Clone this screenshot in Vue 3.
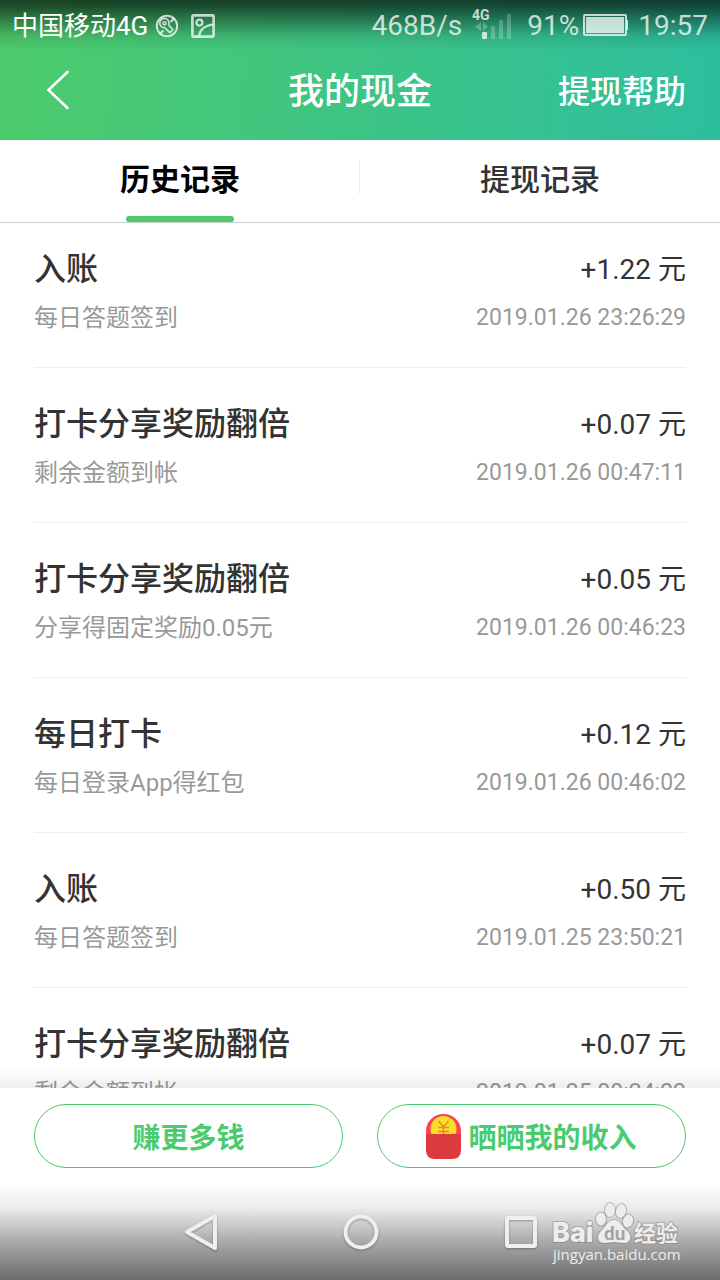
<template>
  <div class="page">
    <header class="header">
      <div class="status-bar">
        <span class="carrier">中国移动4G</span>
        <svg class="status-icon" viewBox="0 0 24 24" fill="none" stroke="currentColor" stroke-width="2">
          <circle cx="12" cy="12" r="10.200" />
          <path d="M13.600 10.800A4.600 4.600 0 1 0 9.600 13.600L14.800 18.600 17.800 15.600Z" stroke-width="1.600" />
          <circle cx="9.500" cy="9.200" r="1.500" stroke-width="1.500" />
          <path d="M15.500 8l4-4M4.500 20l4-3.500" />
        </svg>
        <svg class="status-icon second" viewBox="0 0 24 24" fill="none" stroke="currentColor" stroke-width="2.600">
          <rect x="1.400" y="1.400" width="21.200" height="21.200" rx="1" />
          <circle cx="8.400" cy="8.600" r="3" stroke-width="2.200" />
          <path d="M8 22C9 16 14 11.500 22 10.500" stroke-width="2.200" />
        </svg>
        <span class="speed">468B/s</span>
        <svg class="signal" viewBox="0 0 40 32" fill="currentColor">
          <text x="0" y="12" class="signal-text">4G</text>
          <path d="M9 14v9l-6-4.500zM11 14v9l5-4.500z" opacity="0.35" />
          <rect x="10" y="24" width="5" height="7" rx="1" />
          <rect x="19" y="18" width="4" height="13" rx="1" opacity="0.3" />
          <rect x="27" y="12" width="4" height="19" rx="1" opacity="0.3" />
          <rect x="35" y="6" width="4" height="25" rx="1" opacity="0.3" />
        </svg>
        <span class="percent">91%</span>
        <svg class="battery" viewBox="0 0 46 24" fill="currentColor">
          <rect x="1" y="2" width="42" height="20" rx="1" fill="none" stroke="currentColor" stroke-width="2" />
          <rect x="3" y="4" width="38" height="16" />
          <rect x="43" y="7" width="2" height="10" />
        </svg>
        <time class="clock">19:57</time>
      </div>
      <nav class="nav-bar">
        <button type="button" class="back" aria-label="返回">
          <svg viewBox="0 0 24 40" fill="none" stroke="#fff" stroke-width="2.600" stroke-linecap="round">
            <path d="M21.500 2L2.500 20L21.500 38" />
          </svg>
        </button>
        <h1 class="nav-title">我的现金</h1>
        <a href="#help" class="help">提现帮助</a>
      </nav>
    </header>

    <div class="tabs">
      <button
        v-for="(tab, index) in tabs"
        :key="tab"
        type="button"
        class="tab"
        :class="{ active: index === activeTab }"
        @click="activeTab = index"
      >
        {{ tab }}
      </button>
    </div>

    <main class="list-wrap">
      <ul class="list">
        <li v-for="(record, index) in records" :key="index" class="record">
          <div class="line">
            <span class="title">{{ record.title }}</span>
            <span class="amount">{{ record.amount }} 元</span>
          </div>
          <div class="line sub">
            <span>{{ record.desc }}</span>
            <time class="date">{{ record.time }}</time>
          </div>
        </li>
      </ul>
    </main>

    <footer class="actions">
      <button type="button" class="action">赚更多钱</button>
      <button type="button" class="action">
        <svg class="packet" viewBox="0 0 35 45">
          <path d="M0 21V17A17.500 17 0 0 1 35 17V21Z" fill="#ff3f55" />
          <circle cx="17.500" cy="15" r="13" fill="#ffdf26" />
          <path d="M12.500 7l5 6L22.500 7M17.500 13V21M12 13.500h11M12 17.500h11" fill="none" stroke="#e8892b" stroke-width="1.600" />
          <path d="M0 20H35V36Q35 45 26 45H9Q0 45 0 36Z" fill="#dc3a3f" />
        </svg>
        晒晒我的收入
      </button>
    </footer>

    <div class="system-bar">
      <button type="button" class="key" aria-label="后退">
        <svg viewBox="0 0 40 40"><path d="M35 4V36L7 20Z" /></svg>
      </button>
      <button type="button" class="key" aria-label="主页">
        <svg viewBox="0 0 40 40"><circle cx="21" cy="20" r="15.500" /></svg>
      </button>
      <button type="button" class="key" aria-label="最近任务">
        <svg viewBox="0 0 40 40"><rect x="7" y="6" width="28" height="28" rx="1" /></svg>
      </button>
      <svg class="watermark" viewBox="0 0 132 66">
        <g class="mark">
          <text x="0" y="40" class="mark-latin">Bai</text>
          <ellipse cx="49" cy="17" rx="5" ry="6.500" />
          <ellipse cx="58" cy="8" rx="5" ry="7" />
          <ellipse cx="69" cy="9" rx="5" ry="7" transform="rotate(12 69 9)" />
          <ellipse cx="76" cy="19" rx="5" ry="6.500" transform="rotate(15 76 19)" />
          <path d="M62 18C68 18 70 24 74 28C81 33 79 41 72 41C68 41 65 40 62 40C59 40 56 41 52 41C45 41 44 33 50 28C54 24 56 18 62 18Z" />
          <text x="82" y="39" class="mark-cjk">经验</text>
        </g>
        <text x="52" y="38" class="mark-du">du</text>
        <text x="1" y="58" class="mark-url">jingyan.baidu.com</text>
      </svg>
    </div>
  </div>
</template>

<script setup>
import { ref } from "vue";

const tabs = ["历史记录", "提现记录"];
const activeTab = ref(0);

const records = [
  { title: "入账", amount: "+1.22", desc: "每日答题签到", time: "2019.01.26 23:26:29" },
  { title: "打卡分享奖励翻倍", amount: "+0.07", desc: "剩余金额到帐", time: "2019.01.26 00:47:11" },
  { title: "打卡分享奖励翻倍", amount: "+0.05", desc: "分享得固定奖励0.05元", time: "2019.01.26 00:46:23" },
  { title: "每日打卡", amount: "+0.12", desc: "每日登录App得红包", time: "2019.01.26 00:46:02" },
  { title: "入账", amount: "+0.50", desc: "每日答题签到", time: "2019.01.25 23:50:21" },
  { title: "打卡分享奖励翻倍", amount: "+0.07", desc: "剩余金额到帐", time: "2019.01.25 00:24:22" },
];
</script>

<style>
body {
  margin: 0;
}
</style>

<style scoped>
.page {
  display: flex;
  flex-direction: column;
  height: 100vh;
  overflow: hidden;
  background: #fff;
  color: #333;
  font-family: Roboto, "Noto Sans CJK SC", sans-serif;
}
button {
  padding: 0;
  border: 0;
  background: none;
  color: inherit;
  font-family: inherit;
}
svg {
  display: block;
  flex: none;
}
.header {
  flex: none;
  color: #fff;
  background:
    linear-gradient(rgba(0, 0, 0, 0.68), rgba(0, 0, 0, 0.62) 6px, rgba(0, 0, 0, 0.1) 36px, transparent 50px),
    linear-gradient(95deg, #4dcb6b, #2dbe9f);
}
.status-bar {
  display: flex;
  align-items: center;
  height: 52px;
  padding: 0 12px;
  color: rgba(255, 255, 255, 0.75);
  font-size: 28px;
  line-height: 52px;
}
.carrier {
  color: #fff;
  font-size: 26px;
}
.status-icon {
  width: 24px;
  height: 24px;
  margin-left: 7px;
}
.status-icon.second {
  margin-left: 12px;
}
.speed {
  margin-left: auto;
}
.signal {
  width: 40px;
  height: 32px;
  margin: 0 15px 4px 10px;
  overflow: visible;
}
.signal-text {
  font-size: 14px;
  font-weight: 700;
}
.battery {
  width: 46px;
  height: 24px;
  margin: 0 9px 2px 4px;
}
.nav-bar {
  display: grid;
  grid-template-columns: 1fr auto 1fr;
  align-items: center;
  height: 80px;
  padding: 0 34px 8px;
}
.back {
  justify-self: start;
  padding: 0 12px 4px;
}
.back svg {
  width: 24px;
  height: 40px;
}
.nav-title {
  margin: 0;
  font-size: 36px;
  font-weight: 500;
  line-height: 48px;
}
.help {
  justify-self: end;
  color: #fff;
  font-size: 32px;
  font-weight: 500;
  line-height: 48px;
  text-decoration: none;
}
.tabs {
  display: flex;
  flex: none;
  height: 82px;
  border-bottom: 1px solid #ccc;
}
.tab {
  position: relative;
  flex: 1;
  padding-bottom: 8px;
  font-size: 30px;
  font-weight: 500;
}
.tab.active {
  color: #000;
  font-weight: 700;
}
.tab.active::after {
  content: "";
  position: absolute;
  bottom: 0;
  left: 35%;
  width: 30%;
  height: 6px;
  border-radius: 3px;
  background: #4bcb6d;
}
.tab:first-child::before {
  content: "";
  position: absolute;
  top: 21px;
  right: 0;
  width: 1px;
  height: 33px;
  background: #eee;
}
.list-wrap {
  position: relative;
  flex: 1;
  min-height: 0;
  overflow: hidden;
}
.list-wrap::after {
  content: "";
  position: absolute;
  right: 0;
  bottom: 0;
  left: 0;
  height: 20px;
  background: linear-gradient(transparent, rgba(0, 0, 0, 0.07));
}
.list {
  margin: 0;
  padding: 0 34px;
  list-style: none;
}
.record {
  padding: 32px 0;
  border-bottom: 1px solid #eee;
}
.record:first-child {
  padding-top: 22px;
}
.line {
  display: flex;
  justify-content: space-between;
  font-size: 28px;
  line-height: 48px;
}
.title {
  font-size: 32px;
  font-weight: 500;
}
.amount {
  padding-top: 1px;
}
.line.sub {
  margin-top: 7px;
  color: #999;
  font-size: 24px;
  line-height: 34px;
}
.date {
  font-size: 23px;
}
.actions {
  display: flex;
  flex: none;
  gap: 34px;
  padding: 16px 34px;
}
.action {
  display: flex;
  flex: 1;
  align-items: center;
  justify-content: center;
  gap: 7px;
  height: 64px;
  border: 1px solid #4bcb6d;
  border-radius: 32px;
  color: #4bcb6d;
  font-size: 28px;
  font-weight: 700;
}
.packet {
  width: 35px;
  height: 45px;
}
.system-bar {
  position: relative;
  display: flex;
  flex: none;
  align-items: center;
  justify-content: center;
  gap: 120px;
  height: 96px;
  background: linear-gradient(#fff, #ebebeb 24px, #a6a6a6 60px, #6b6b6b);
}
.key svg {
  width: 40px;
  height: 40px;
  fill: none;
  stroke: #efefef;
  stroke-width: 4;
  stroke-linejoin: round;
  filter: drop-shadow(0 1px 1px rgba(0, 0, 0, 0.3));
}
.watermark {
  position: absolute;
  right: 36px;
  bottom: 12px;
  width: 132px;
  height: 66px;
  overflow: visible;
  fill: #ededed;
}
.mark {
  stroke: rgba(120, 120, 120, 0.45);
  stroke-width: 2;
  paint-order: stroke;
}
.mark-latin {
  font-family: Inter, sans-serif;
  font-size: 27px;
  font-weight: 800;
}
.mark-cjk {
  font-size: 22px;
  font-weight: 700;
}
.mark-du {
  fill: #a4a4a4;
  font-size: 19px;
  font-weight: 700;
}
.mark-url {
  font-family: "Open Sans", sans-serif;
  font-size: 15px;
}
</style>
